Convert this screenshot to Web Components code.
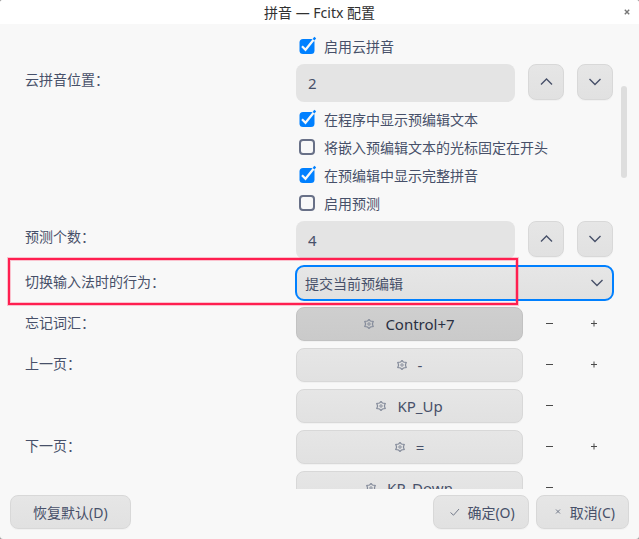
<!DOCTYPE html>
<html lang="zh-CN">
<head>
<meta charset="utf-8">
<title>拼音 — Fcitx 配置</title>
<style>
    html {
        height: 100%;
        background: #9a9a9a;
    }
    body {
        margin: 0;
        height: 100%;
        font: 14px/20px "Noto Sans", "Noto Sans CJK SC", sans-serif;
        color: #475069;
    }
</style>
</head>
<body>
<config-window caption="拼音 — Fcitx 配置">
    <check-field checked>启用云拼音</check-field>
    <spin-field label="云拼音位置：" value="2"></spin-field>
    <check-field checked>在程序中显示预编辑文本</check-field>
    <check-field>将嵌入预编辑文本的光标固定在开头</check-field>
    <check-field checked>在预编辑中显示完整拼音</check-field>
    <check-field>启用预测</check-field>
    <spin-field label="预测个数：" value="4"></spin-field>
    <choice-field label="切换输入法时的行为：" options="提交当前预编辑" marked></choice-field>
    <key-field label="忘记词汇：" pressed addable>Control+7</key-field>
    <key-field label="上一页：" addable>-</key-field>
    <key-field>KP_Up</key-field>
    <key-field label="下一页：" addable>=</key-field>
    <key-field>KP_Down</key-field>
    <action-button slot="reset" wide>恢复默认(D)</action-button>
    <action-button slot="actions" icon="check">确定(O)</action-button>
    <action-button slot="actions" icon="cross">取消(C)</action-button>
</config-window>

<script>
const icons = {
    up: `<svg width="14" height="14" viewBox="0 0 14 14"><path d="M2 9.500 7.500 4l5.500 5.500"/></svg>`,
    down: `<svg width="14" height="14" viewBox="0 0 14 14"><path d="M1.500 4 7 9.500 12.500 4"/></svg>`,
    minus: `<svg width="8" height="8" viewBox="0 0 8 8"><path d="M0 3.500h7"/></svg>`,
    plus: `<svg width="8" height="8" viewBox="0 0 8 8"><path d="M0 3.500h6M3 .5v6"/></svg>`,
    check: `<svg width="16" height="16" viewBox="0 0 16 16"><path d="M3.500 7.500 6.500 10.200 12 4"/></svg>`,
    cross: `<svg width="16" height="16" viewBox="0 0 16 16"><path d="m6 4.500 4 4M10 4.500l-4 4"/></svg>`,
    gear: `<svg width="10" height="10" viewBox="0 0 10 10"><path stroke-width="1.200" d="M5 .5 6.400 2 9.200 2.500 8.400 5 9.200 7.500 6.400 8 5 9.500 3.600 8 .8 7.500 1.600 5 .8 2.500 3.600 2Z"/><circle cx="5" cy="5" r="1.200"/></svg>`
};

// Rules shared by every element that draws a button-like control.
const controlStyles = `
    * {
        box-sizing: border-box;
    }
    svg {
        display: block;
        flex: none;
        fill: none;
        stroke: currentColor;
    }
    button, input, select {
        margin: 0;
        font: inherit;
        color: inherit;
    }
    button {
        display: flex;
        align-items: center;
        justify-content: center;
        padding: 0;
    }
    .raised {
        border: 1px solid #d8d8d8;
        border-radius: 8px;
        background: linear-gradient(#e6e6e6, #e1e1e1);
        box-shadow: 0 1px 1px #00000008;
    }
`;

const fieldStyles = `
    :host {
        display: grid;
        grid-template-columns: 271px minmax(0, 1fr);
        align-items: start;
        position: relative;
    }
    .name {
        line-height: 32px;
    }
    .control {
        grid-column: 2;
        display: flex;
    }
`;

class Field extends HTMLElement {

    get labelMarkup() {
        const label = this.getAttribute("label");
        return label ? `<label class="name" for="control">${label}</label>` : "";
    }

    connectedCallback() {
        if (this.shadowRoot) return;
        const shadow = this.attachShadow({mode: "open"});
        shadow.innerHTML = `<style>${controlStyles}${fieldStyles}${this.styles}</style>${this.render()}`;
        this.bind(shadow);
    }

    bind() {
    }
}

class CheckField extends Field {

    get styles() {
        return `
            .control {
                align-items: center;
                justify-self: start;
                gap: 8px;
                height: 21px;
                padding-left: 3px;
            }
            .box {
                display: grid;
                width: 17px;
                height: 17px;
            }
            input, svg {
                grid-area: 1 / 1;
            }
            input {
                appearance: none;
                width: 16px;
                height: 16px;
                border: 2px solid #687087;
                border-radius: 4px;
            }
            input:checked {
                border-color: transparent;
            }
            svg {
                visibility: hidden;
                overflow: visible;
                pointer-events: none;
            }
            input:checked + svg {
                visibility: visible;
            }
        `;
    }

    render() {
        return `
            <label class="control">
                <span class="box">
                    <input type="checkbox" ${this.hasAttribute("checked") ? "checked" : ""}>
                    <svg width="17" height="17" viewBox="0 0 17 17">
                        <rect x=".5" y="1" width="15" height="15" rx="3.500" fill="#0080ff" stroke="none"/>
                        <path d="M3 8.200 6.500 11.800 15 1.200" stroke="#f8f8f8" stroke-width="2.200"/>
                        <path d="M14.600 1.700 16.200-.4" stroke="#0080ff" stroke-width="2.400"/>
                    </svg>
                </span>
                <slot></slot>
            </label>
        `;
    }
}

class SpinField extends Field {

    get styles() {
        return `
            .control {
                gap: 13px;
            }
            input {
                flex: 1;
                min-width: 0;
                height: 38px;
                padding: 0 12px;
                border: 0;
                border-radius: 8px;
                outline: 0;
                background: #e4e4e4;
                font-size: 15px;
            }
            button {
                width: 36px;
                height: 36px;
            }
            svg {
                stroke-width: 1.400;
            }
        `;
    }

    render() {
        return `
            ${this.labelMarkup}
            <div class="control">
                <input id="control" type="text" inputmode="numeric" value="${this.getAttribute("value")}">
                <button class="raised" type="button" data-step="1">${icons.up}</button>
                <button class="raised" type="button" data-step="-1">${icons.down}</button>
            </div>
        `;
    }

    bind(shadow) {
        const input = shadow.querySelector("input");
        shadow.querySelectorAll("button").forEach(button => {
            button.addEventListener("click", () => {
                input.value = Math.max(0, Number(input.value) + Number(button.dataset.step));
            });
        });
    }
}

class ChoiceField extends Field {

    get styles() {
        return `
            .control {
                display: grid;
                align-items: center;
            }
            select, svg {
                grid-area: 1 / 1;
            }
            select {
                appearance: none;
                width: 100%;
                height: 34px;
                padding: 2px 8px 0;
                border-radius: 8px;
                outline: 2px solid #0080ff;
                outline-offset: -1px;
                box-shadow: inset 0 0 0 1px #f8f8f8;
            }
            svg {
                justify-self: end;
                margin-right: 9px;
                stroke-width: 1.400;
                pointer-events: none;
            }
            :host([marked])::after {
                content: "";
                position: absolute;
                inset: -8px 95px -5px -17px;
                border: 2px solid #ff1f50;
                box-shadow: 0 0 0 1px #ff1f5040, inset 0 0 0 1px #ff1f5040;
                pointer-events: none;
            }
        `;
    }

    render() {
        const options = this.getAttribute("options").split(",");
        return `
            ${this.labelMarkup}
            <div class="control">
                <select id="control" class="raised">
                    ${options.map(option => `<option>${option}</option>`).join("")}
                </select>
                ${icons.down}
            </div>
        `;
    }
}

class KeyField extends Field {

    get styles() {
        return `
            .control {
                display: grid;
                grid-template-columns: 1fr 37px 37px;
                gap: 8px;
            }
            button {
                height: 34px;
            }
            .key {
                gap: 11px;
                font-size: 15px;
            }
            .key svg {
                color: #858c9b;
            }
            .flat {
                border: 0;
                background: none;
                color: #4a4a4a;
            }
            :host([pressed]) .key {
                border-color: #c2c2c2;
                background: linear-gradient(#cfcfcf, #cacaca);
                color: #2a3042;
            }
        `;
    }

    render() {
        return `
            ${this.labelMarkup}
            <div class="control">
                <button id="control" class="key raised" type="button">${icons.gear}<slot></slot></button>
                <button class="flat" type="button">${icons.minus}</button>
                ${this.hasAttribute("addable") ? `<button class="flat" type="button">${icons.plus}</button>` : ""}
            </div>
        `;
    }
}

class ActionButton extends HTMLElement {

    connectedCallback() {
        if (this.shadowRoot) return;
        const shadow = this.attachShadow({mode: "open"});
        shadow.innerHTML = `
            <style>
                ${controlStyles}
                :host {
                    display: block;
                }
                button {
                    gap: 4px;
                    height: 34px;
                    padding: 2px 13px 0;
                }
                :host([wide]) button {
                    padding: 2px 22px 0;
                }
                svg {
                    color: #737a8a;
                }
            </style>
            <button class="raised" type="button">${icons[this.getAttribute("icon")] || ""}<slot></slot></button>
        `;
    }
}

const windowTemplate = document.createElement("template");
windowTemplate.innerHTML = `
<style>
    :host {
        display: flex;
        flex-direction: column;
        height: 100%;
        overflow: hidden;
        border-radius: 3px;
        background: #f8f8f8;
    }
    header {
        display: grid;
        grid-template-columns: 24px 1fr 24px;
        align-items: center;
        height: 24px;
        flex: none;
        background: #fff;
        color: #303030;
    }
    h1 {
        grid-column: 2;
        margin: 0;
        padding-top: 2px;
        font: inherit;
        text-align: center;
    }
    .close {
        display: grid;
        place-items: center;
        height: 24px;
        padding: 0;
        border: 0;
        background: none;
        color: #777;
    }
    .close svg {
        fill: none;
        stroke: currentColor;
        stroke-width: 1.400;
    }
    main {
        flex: 1;
        min-height: 0;
        position: relative;
    }
    .scroll {
        display: flex;
        flex-direction: column;
        gap: 7px;
        box-sizing: border-box;
        height: 100%;
        padding: 12px 26px 12px 25px;
        overflow: auto;
        scrollbar-width: none;
    }
    ::slotted(*) {
        flex: none;
    }
    .thumb {
        position: absolute;
        top: 62px;
        right: 12px;
        width: 6px;
        height: 92px;
        border-radius: 3px;
        background: #dedede;
    }
    footer {
        display: flex;
        justify-content: space-between;
        flex: none;
        padding: 6px 10px 10px;
    }
    .actions {
        display: flex;
        gap: 7px;
    }
</style>
<header>
    <h1></h1>
    <button class="close" type="button"><svg width="6" height="6" viewBox="0 0 6 6"><path d="m.8.8 4.400 4.400M5.200.8.8 5.200"/></svg></button>
</header>
<main>
    <div class="scroll"><slot></slot></div>
    <div class="thumb"></div>
</main>
<footer>
    <slot name="reset"></slot>
    <div class="actions"><slot name="actions"></slot></div>
</footer>
`;

class ConfigWindow extends HTMLElement {

    constructor() {
        super();
        const shadow = this.attachShadow({mode: "open"});
        shadow.appendChild(windowTemplate.content.cloneNode(true));
    }

    connectedCallback() {
        this.shadowRoot.querySelector("h1").textContent = this.getAttribute("caption");
    }
}

window.customElements.define("check-field", CheckField);
window.customElements.define("spin-field", SpinField);
window.customElements.define("choice-field", ChoiceField);
window.customElements.define("key-field", KeyField);
window.customElements.define("action-button", ActionButton);
window.customElements.define("config-window", ConfigWindow);
</script>
</body>
</html>
